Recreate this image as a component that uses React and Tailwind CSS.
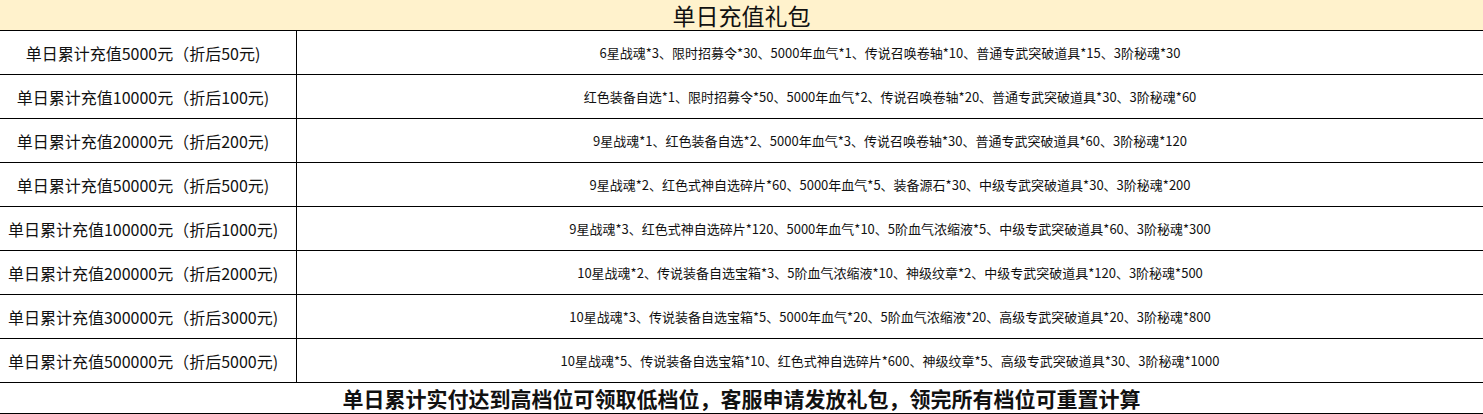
const tiers = [
  {
    label: '单日累计充值5000元（折后50元)',
    rewards: '6星战魂*3、限时招募令*30、5000年血气*1、传说召唤卷轴*10、普通专武突破道具*15、3阶秘魂*30',
  },
  {
    label: '单日累计充值10000元（折后100元)',
    rewards: '红色装备自选*1、限时招募令*50、5000年血气*2、传说召唤卷轴*20、普通专武突破道具*30、3阶秘魂*60',
  },
  {
    label: '单日累计充值20000元（折后200元)',
    rewards: '9星战魂*1、红色装备自选*2、5000年血气*3、传说召唤卷轴*30、普通专武突破道具*60、3阶秘魂*120',
  },
  {
    label: '单日累计充值50000元（折后500元)',
    rewards: '9星战魂*2、红色式神自选碎片*60、5000年血气*5、装备源石*30、中级专武突破道具*30、3阶秘魂*200',
  },
  {
    label: '单日累计充值100000元（折后1000元)',
    rewards: '9星战魂*3、红色式神自选碎片*120、5000年血气*10、5阶血气浓缩液*5、中级专武突破道具*60、3阶秘魂*300',
  },
  {
    label: '单日累计充值200000元（折后2000元)',
    rewards: '10星战魂*2、传说装备自选宝箱*3、5阶血气浓缩液*10、神级纹章*2、中级专武突破道具*120、3阶秘魂*500',
  },
  {
    label: '单日累计充值300000元（折后3000元)',
    rewards: '10星战魂*3、传说装备自选宝箱*5、5000年血气*20、5阶血气浓缩液*20、高级专武突破道具*20、3阶秘魂*800',
  },
  {
    label: '单日累计充值500000元（折后5000元)',
    rewards: '10星战魂*5、传说装备自选宝箱*10、红色式神自选碎片*600、神级纹章*5、高级专武突破道具*30、3阶秘魂*1000',
  },
]

export default function App() {
  return (
    <div className="w-[1483px] bg-white text-[#111] font-['Noto_Sans_CJK_SC','Noto_Sans',sans-serif]">
      {/* title */}
      <div className="flex h-[31px] items-center justify-center border-b border-black bg-[#fff2cc] text-[23px] leading-[30px]">
        单日充值礼包
      </div>

      {/* tiers */}
      {tiers.map((tier) => (
        <div key={tier.label} className="flex h-[44px] border-b border-black">
          <div className="flex w-[297px] shrink-0 items-center justify-center border-r border-black pr-[10px] text-[16px] whitespace-nowrap">
            {tier.label}
          </div>
          <div className="flex flex-1 items-center justify-center text-[13px] whitespace-nowrap">
            {tier.rewards}
          </div>
        </div>
      ))}

      {/* note */}
      <div className="flex h-[31px] items-center justify-center border-b border-black text-[21px] font-bold leading-[30px]">
        单日累计实付达到高档位可领取低档位，客服申请发放礼包，领完所有档位可重置计算
      </div>
    </div>
  )
}
